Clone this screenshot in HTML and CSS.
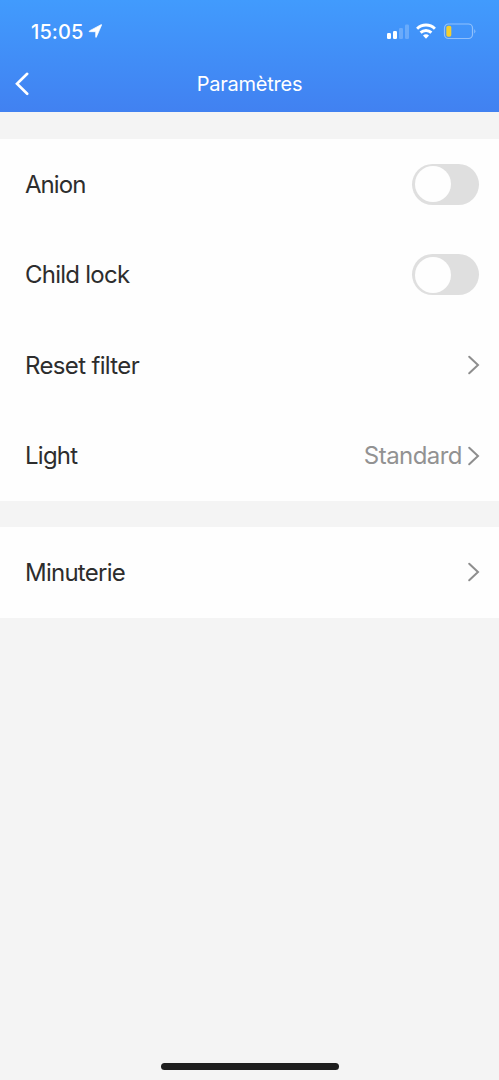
FILE: index.html
```html
<!DOCTYPE html>
<html lang="fr">
<head>
<meta charset="utf-8">
<title>Paramètres</title>
<link rel="stylesheet" href="styles.css">
</head>
<body>
<div class="screen">
  <header class="header">
    <div class="status">
      <span class="time">15:05</span>
      <svg class="location" width="15" height="15" viewBox="0 0 15 15"><path d="M13.600 1 8.300 13.200q-.4.700-.6-.1V7.700H1.600q-1-.3-.2-.8L13 .7q.8-.3.600.3z" fill="#fff" stroke="#fff" stroke-width=".7" stroke-linejoin="round"/></svg>
      <svg class="signals" width="90" height="18" viewBox="0 0 90 18">
        <g fill="#fff">
          <rect x="1" y="11" width="4" height="6" rx="1.200"/>
          <rect x="7" y="9" width="4" height="8" rx="1.200"/>
          <rect x="13" y="6" width="4" height="11" rx="1.200" opacity=".22"/>
          <rect x="19" y="2.500" width="4" height="14.500" rx="1.200" opacity=".22"/>
        </g>
        <g fill="none" stroke="#fff" stroke-width="2.900">
          <path d="M31.100 6.700a12.700 12.700 0 0 1 17.800 0"/>
          <path d="M34.600 10.600a7.800 7.800 0 0 1 10.800 0"/>
        </g>
        <path d="M37 13.600a4.200 4.200 0 0 1 6 0l-3 3.200z" fill="#fff"/>
        <rect x="58.500" y="2" width="28" height="14.500" rx="4" fill="none" stroke="#fff" stroke-opacity=".42" stroke-width="1.200"/>
        <rect x="60.300" y="3.800" width="5" height="11" rx="1.800" fill="#f3cf2f"/>
        <path d="M88.400 7q1.800 2.300 0 4.600z" fill="#fff" opacity=".5"/>
      </svg>
    </div>
    <nav class="nav">
      <svg class="back" width="16" height="24" viewBox="0 0 16 24"><path d="M13.200 1.800 3 11.800l10.200 10" fill="none" stroke="#fff" stroke-width="2.600" stroke-linecap="round" stroke-linejoin="miter"/></svg>
      <h1 class="title">Paramètres</h1>
    </nav>
  </header>
  <main class="groups">
    <section class="group">
      <div class="row"><span class="label anion">Anion</span><span class="toggle"><span class="knob"></span></span></div>
      <div class="row"><span class="label child">Child lock</span><span class="toggle"><span class="knob"></span></span></div>
      <div class="row"><span class="label reset">Reset filter</span><svg class="chevron" width="13" height="20" viewBox="0 0 13 20"><path d="m2.200 1.800 8.800 8.200-8.800 8.200" fill="none" stroke="#8e8e8e" stroke-width="2" stroke-linecap="round"/></svg></div>
      <div class="row"><span class="label light">Light</span><span class="value">Standard</span><svg class="chevron" width="13" height="20" viewBox="0 0 13 20"><path d="m2.200 1.800 8.800 8.200-8.800 8.200" fill="none" stroke="#8e8e8e" stroke-width="2" stroke-linecap="round"/></svg></div>
    </section>
    <section class="group">
      <div class="row"><span class="label minuterie">Minuterie</span><svg class="chevron" width="13" height="20" viewBox="0 0 13 20"><path d="m2.200 1.800 8.800 8.200-8.800 8.200" fill="none" stroke="#8e8e8e" stroke-width="2" stroke-linecap="round"/></svg></div>
    </section>
  </main>
  <div class="home-bar"></div>
</div>
</body>
</html>
```
FILE: styles.css
```css
* { box-sizing: border-box; }
body { margin: 0; font-family: Inter, "Liberation Sans", sans-serif; }
.screen { display: flex; flex-direction: column; height: 1080px; background: #f4f4f4; }
.header { height: 112px; background: linear-gradient(#419bfd, #4181f1); color: #fff; }
.status { display: flex; align-items: center; height: 63px; padding: 0 23px 0 31px; }
.time { font-size: 20px; font-weight: 500; letter-spacing: .1px; }
.location { margin-left: 4px; }
.signals { margin: -1px 0 0 auto; }
.nav { display: grid; grid-template-columns: 40px 1fr 40px; align-items: center; height: 42px; }
.back { margin-left: 14px; }
.title { margin: 0; text-align: center; font-size: 20px; font-weight: 400; letter-spacing: -.25px; }
.groups { display: flex; flex-direction: column; gap: 26px; padding-top: 27px; }
.group { background: #fefefe; }
.row { display: flex; align-items: center; height: 90.5px; padding: 0 19px 0 25px; }
.label { margin-right: auto; color: #2d2d2d; font-size: 24px; letter-spacing: -.75px; white-space: nowrap; }
.anion { letter-spacing: -.95px; }
.reset { letter-spacing: -.65px; }
.value { margin-right: 5px; color: #929292; font-size: 24px; letter-spacing: -.55px; }
.toggle { width: 67px; height: 41px; margin-right: 1px; padding: 2.5px; border-radius: 21px; background: #dfdfdf; }
.knob { display: block; width: 36px; height: 36px; border-radius: 50%; background: #fefefe; }
.home-bar { width: 178px; height: 7px; margin: auto auto 10px; border-radius: 4px; background: #1e1e1e; }
```
